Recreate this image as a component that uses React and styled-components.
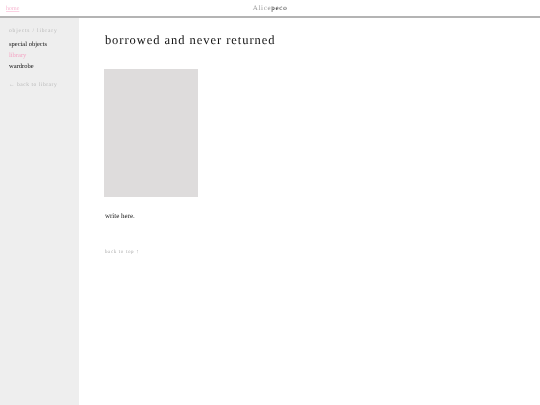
import React from "react";
import styled, { createGlobalStyle } from "styled-components";

const GlobalStyle = createGlobalStyle`
  html, body {
    margin: 0;
    padding: 0;
    background: #fff;
    font-family: "Liberation Serif", "Times New Roman", serif;
    text-rendering: geometricPrecision;
  }
`;

const Page = styled.div`
  width: 540px;
  height: 405px;
  display: flex;
  flex-direction: column;
  overflow: hidden;
  will-change: opacity;
`;

const Header = styled.header`
  height: 16px;
  flex: none;
  display: grid;
  grid-template-columns: 1fr auto 1fr;
  align-items: center;
  border-bottom: 2px solid #b4b4b4;
`;

const HomeLink = styled.a`
  display: block;
  padding: 2px 0 0 6px;
  font-size: 6px;
  line-height: 14px;
  color: #f7b4cf;
  text-decoration: underline;
  text-decoration-color: #fbd3e3;
  text-decoration-thickness: 0.3px;
`;

const Logo = styled.div`
  font-size: 7px;
  line-height: 16px;
  letter-spacing: 0.7px;
  color: #999;
  & b {
    font-weight: 400;
    color: #222;
  }
`;

const Body = styled.div`
  flex: 1;
  display: flex;
`;

const Sidebar = styled.aside`
  width: 79px;
  flex: none;
  background: #eee;
  padding: 9px 0 0 9px;
  box-sizing: border-box;
`;

const Crumb = styled.div`
  padding-top: 1px;
  font-size: 5.5px;
  line-height: 7px;
  letter-spacing: 0.82px;
  color: #b8b8b8;
  margin-bottom: 4px;
`;

const NavItem = styled.a`
  display: block;
  font-size: 6.5px;
  line-height: 11px;
  color: ${(p) => (p.$active ? "#f4a6c4" : "#111")};
`;

const BackLink = styled.div`
  font-size: 5.5px;
  line-height: 7px;
  letter-spacing: 0.55px;
  color: #b8b8b8;
  margin-top: 10px;
`;

const Main = styled.main`
  flex: 1;
  padding: 14px 0 0 25.4px;
`;

const Title = styled.h1`
  margin: 0 0 21px;
  padding-left: 0.5px;
  font-size: 12.5px;
  line-height: 16px;
  font-weight: 400;
  letter-spacing: 0.96px;
  color: #111;
`;

const Placeholder = styled.div`
  width: 94px;
  height: 128px;
  background: #dedcdc;
`;

const Text = styled.p`
  margin: 14px 0 0;
  padding-left: 0.5px;
  font-size: 7px;
  line-height: 10px;
  color: #222;
`;

const TopLink = styled.div`
  margin-top: 28px;
  padding-left: 0.5px;
  font-size: 5px;
  line-height: 7px;
  letter-spacing: 0.65px;
  color: #aaa;
`;

export default function App() {
  return (
    <>
      <GlobalStyle />
      <Page>
        <Header>
          <div>
            <HomeLink>home</HomeLink>
          </div>
          <Logo>
            Alice<b>peco</b>
          </Logo>
        </Header>
        <Body>
          <Sidebar>
            <Crumb>objects / library</Crumb>
            <NavItem>special objects</NavItem>
            <NavItem $active>library</NavItem>
            <NavItem>wardrobe</NavItem>
            <BackLink>← back to library</BackLink>
          </Sidebar>
          <Main>
            <Title>borrowed and never returned</Title>
            <Placeholder />
            <Text>write here.</Text>
            <TopLink>back to top ↑</TopLink>
          </Main>
        </Body>
      </Page>
    </>
  );
}
